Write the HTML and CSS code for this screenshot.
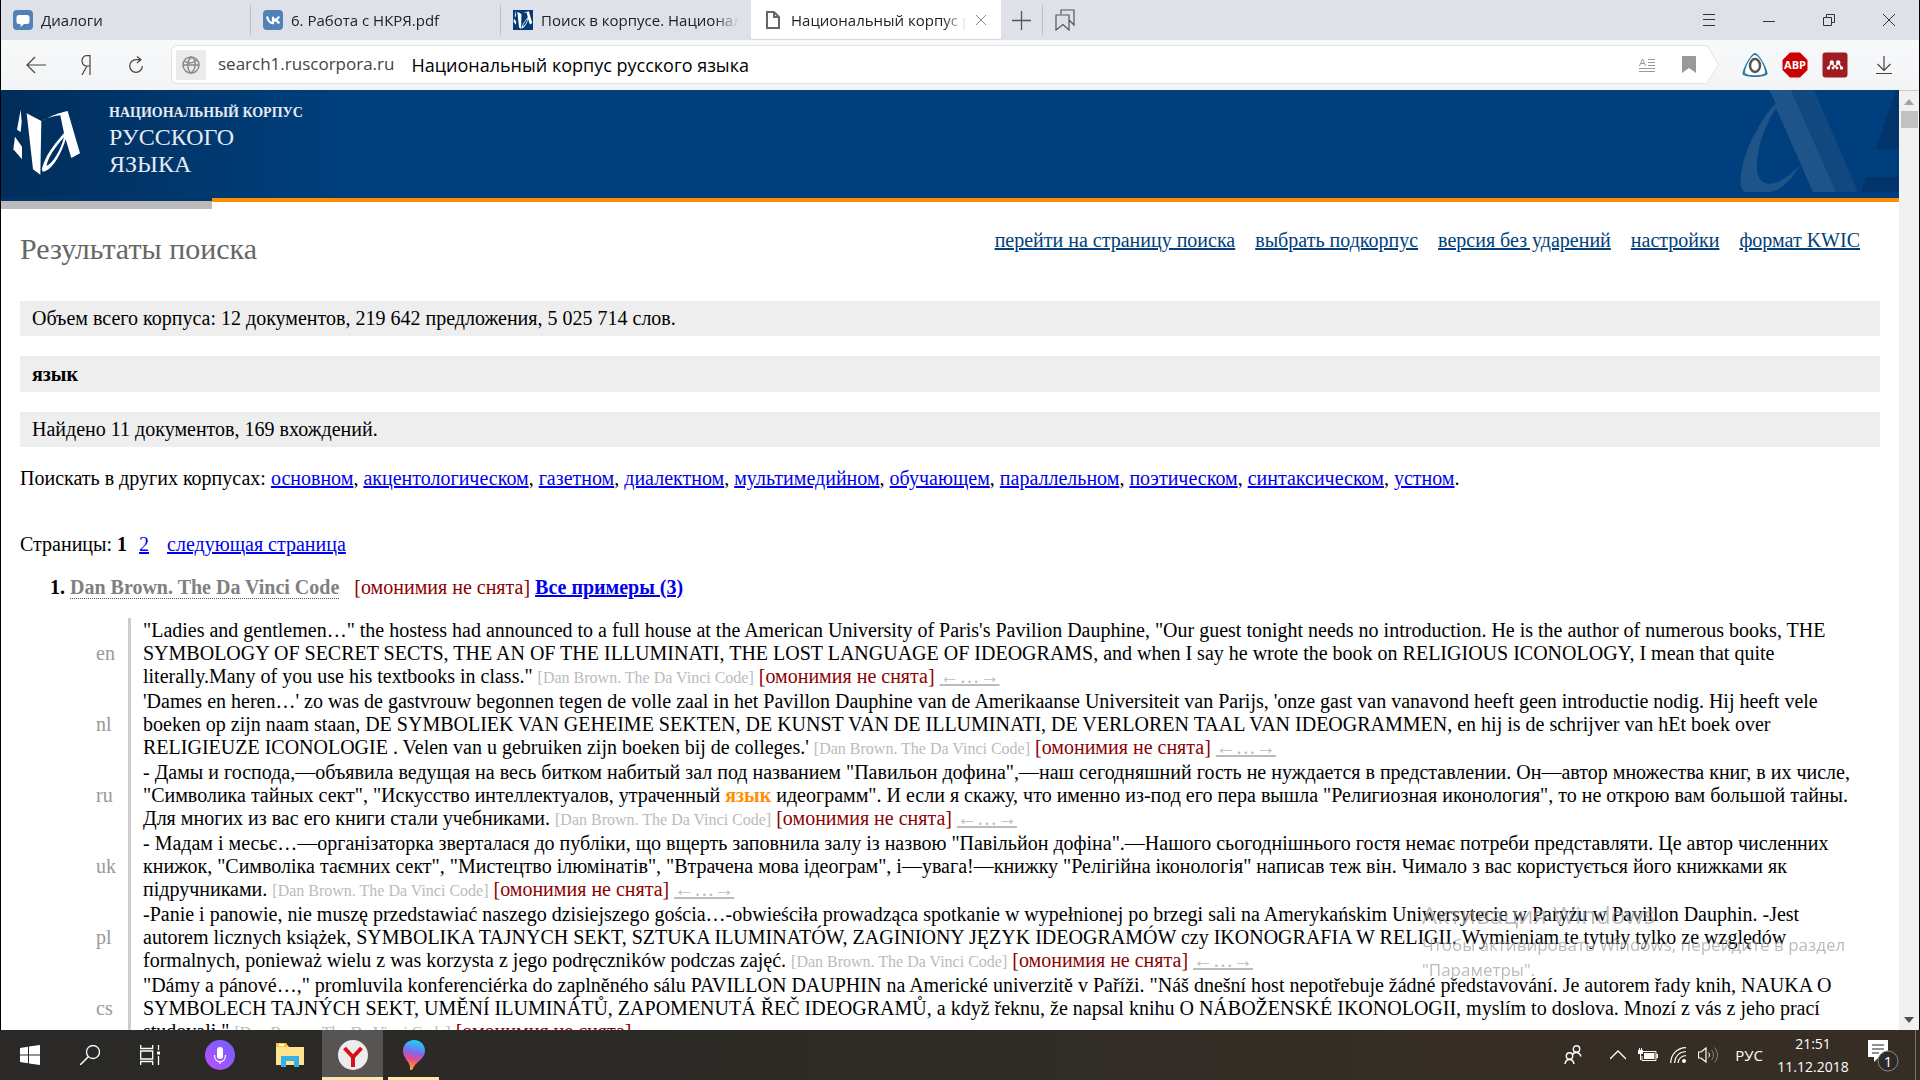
FILE: index.html
```
<!DOCTYPE html>
<html lang="ru">
<head>
<meta charset="utf-8">
<title>Национальный корпус русского языка</title>
<link rel="stylesheet" href="styles.css">
</head>
<body>
<div class="browser">
  <div class="tabbar">
    <a class="tab" href="#"><svg width="20" height="20" viewBox="0 0 20 20"><rect width="20" height="20" rx="4" fill="#5181b8"/><path d="M6 5h8a2.500 2.500 0 0 1 2.500 2.500v4A2.500 2.500 0 0 1 14 14h-3l-3.500 3v-3H6a2.500 2.500 0 0 1-2.500-2.500v-4A2.500 2.500 0 0 1 6 5z" fill="#fff"/></svg><span class="tab-title">Диалоги</span></a>
    <a class="tab" href="#"><svg width="20" height="20" viewBox="0 0 20 20"><rect width="20" height="20" rx="4" fill="#5181b8"/><path d="M4 6.500c1 3.800 2.800 6.700 6 6.700V6.700M16 6.500c-.7 2-2.500 3.200-5.500 3.300 2.500.2 4.500 1.300 5.600 3.700" fill="none" stroke="#fff" stroke-width="2.200"/></svg><span class="tab-title">6. Работа с НКРЯ.pdf</span></a>
    <a class="tab" href="#"><svg width="20" height="20" viewBox="36 50 210 214"><path d="M20 40h240v240H20z" fill="#023a76"/><use href="#logo-mark"/></svg><span class="tab-title">Поиск в корпусе. Национальный корпус</span></a>
    <a class="tab tab-active" href="#"><svg width="20" height="20" viewBox="0 0 20 20"><path d="M4 2h7l5 5v11H4zM11 2v5h5" fill="none" stroke="#666" stroke-width="2"/></svg><span class="tab-title">Национальный корпус русского</span><svg class="tab-close" width="12" height="12" viewBox="0 0 12 12"><path d="M1 1l10 10M11 1L1 11" stroke="#888"/></svg></a>
    <button class="icon-btn new-tab" aria-label="Новая вкладка"><svg width="20" height="20" viewBox="0 0 20 20"><path d="M0 10.500h19M9.500 1v19" stroke="#555" stroke-width="1.300"/></svg></button>
    <button class="icon-btn collections" aria-label="Закладки"><svg width="20" height="22" viewBox="0 0 20 22"><path d="M6 5V1h13v15l-5-5M1 6h13v15l-6-5.500L1 21z" fill="none" stroke="#555" stroke-width="1.200"/></svg></button>
    <div class="window-controls">
      <button class="icon-btn" aria-label="Меню"><svg width="12" height="12" viewBox="0 0 12 12"><path d="M0 .5h12M0 5.500h12M0 11.500h12" stroke="#333"/></svg></button>
      <button class="icon-btn" aria-label="Свернуть"><svg width="12" height="12" viewBox="0 0 12 12"><path d="M0 7.500h12" stroke="#333"/></svg></button>
      <button class="icon-btn" aria-label="Восстановить"><svg width="12" height="12" viewBox="0 0 12 12"><path d="M.5 3.500h8v8h-8zM3.500 3V.5h8v8H9" fill="none" stroke="#333"/></svg></button>
      <button class="icon-btn" aria-label="Закрыть"><svg width="12" height="12" viewBox="0 0 12 12"><path d="M0 0l12 12M12 0L0 12" stroke="#333"/></svg></button>
    </div>
  </div>

  <div class="toolbar">
    <button class="icon-btn nav-btn" aria-label="Назад"><svg width="20" height="18" viewBox="0 0 20 18"><path d="M20 9H1M9 1L1 9l8 8" fill="none" stroke="#444" stroke-width="1.200"/></svg></button>
    <button class="icon-btn nav-btn" aria-label="Яндекс"><svg width="10" height="20" viewBox="0 0 10 20"><path d="M9 20V.7H5.500C-.5.7-.5 11 5.500 11H9M6 11L1 20" fill="none" stroke="#444" stroke-width="1.200"/></svg></button>
    <button class="icon-btn nav-btn" aria-label="Обновить"><svg width="14" height="18" viewBox="0 0 14 18"><path d="M13.300 10a6.300 6.300 0 1 1-6.300-6.300h5M8 .5l4 3.200-4 3.300" fill="none" stroke="#444" stroke-width="1.200"/></svg></button>
    <form class="address">
      <button type="button" class="icon-btn site-info" aria-label="О сайте"><svg width="18" height="18" viewBox="0 0 18 18"><g fill="none" stroke="#888" stroke-width="1.400"><circle cx="9" cy="9" r="8"/><path d="M1 9h16M10 1c-6 3-5 13-1 16M10 1c5 4 4 12-1 16M2 5c4 3 9 2 13-1"/></g></svg></button>
      <label class="domain" for="omnibox">search1.ruscorpora.ru</label>
      <input id="omnibox" class="omnibox" type="text" value="Национальный корпус русского языка">
      <button type="button" class="icon-btn reader" aria-label="Режим чтения"><svg width="16" height="14" viewBox="0 0 16 14"><path d="M.5 8L3.500 1l3 7M1.500 5.500h4M9 1.500h7M9 4.500h7M9 7.500h7M0 10.500h16M0 13.500h16" fill="none" stroke="#999"/></svg></button>
      <button type="button" class="icon-btn bookmark" aria-label="В закладки"><svg width="14" height="17" viewBox="0 0 14 17"><path d="M0 1q0-1 1-1h12q1 0 1 1v16l-7-5-7 5z" fill="#999"/></svg></button>
      <svg class="address-tip" width="12" height="39" viewBox="0 0 12 39"><path d="M0 .5L11.500 19.500 0 38.500" fill="#fff" stroke="#e2e4e6"/></svg>
    </form>
    <div class="extensions">
      <button class="icon-btn" aria-label="Расширение"><svg width="26" height="26" viewBox="0 0 26 26"><path d="M13 1C17 1 26 18 25.500 22 24 26 2 26 .5 22 0 18 9 1 13 1z" fill="#2d7ba0"/><path d="M13 3c4 0 10.500 13.500 10 18-2 3-18 3-20 0C2.500 16.500 9 3 13 3z" fill="#fff"/><ellipse cx="13" cy="13.500" rx="5" ry="6.500" fill="none" stroke="#555" stroke-width="2.500"/></svg></button>
      <button class="icon-btn" aria-label="Adblock Plus"><svg width="26" height="26" viewBox="0 0 26 26"><path d="M8 .5h10L25.500 8v10L18 25.500H8L.5 18V8z" fill="#c00"/><text x="13" y="17" class="abp">ABP</text></svg></button>
      <button class="icon-btn" aria-label="Mendeley"><svg width="26" height="26" viewBox="0 0 26 26"><rect x=".5" y=".5" width="25" height="25" rx="3" fill="#a01c22"/><path d="M6.500 16L9.500 10.500 13 15l3.500-4.500 3 5.500" fill="none" stroke="#fff" stroke-width="1.300"/><g fill="#fff"><circle cx="9.800" cy="10.500" r="2.200"/><circle cx="16.200" cy="10.500" r="2.200"/><circle cx="6.500" cy="16" r="1.700"/><circle cx="19.500" cy="16" r="1.700"/><circle cx="11" cy="16" r="1.400"/><circle cx="15" cy="16" r="1.400"/></g></svg></button>
      <button class="icon-btn downloads" aria-label="Загрузки"><svg width="16" height="20" viewBox="0 0 16 20"><path d="M8 1v14M1.500 9L8 15.500 14.500 9M0 18.500h16" fill="none" stroke="#444" stroke-width="1.200"/></svg></button>
    </div>
  </div>

  <div class="viewport">
    <main class="page">
      <header class="masthead">
        <a class="brand" href="#">
          <svg width="70" height="68" viewBox="36 54 210 204"><g id="logo-mark" fill="#fff"><path d="M62 59l3 36-3 31-11-7z"/><path d="M45 140l21 30v38l-26-30z"/><path d="M80 70l44 23-3 161-22-16z"/><path d="M130 91c25-14 45-22 73-28l37 127-26 14-17-56c-12 40-36 86-62 96-7 4-11-2-8-12 10-34 28-60 65-103l-11-53c-15 1-35 7-51 14zM192 142c-34 38-50 68-52 86 18-8 42-46 52-86z"/></g></svg>
          <span class="brand-name"><span class="brand-top">НАЦИОНАЛЬНЫЙ КОРПУС</span><span class="brand-line">РУССКОГО</span><span class="brand-line">ЯЗЫКА</span></span>
        </a>
        <svg class="masthead-art" width="169" height="108" viewBox="1730 90 169 108"><path d="M1791 90h23l44 102h-22z" fill="#10487f"/><path d="M1769 90h22l45 102h-23l-37-84c-14 22-20 45-19 62 2 20 22 18 43-5-10 17-20 25-30 27h-25c-6-4-5-14-3-24 5-24 20-50 34-65z" fill="#1f5488"/><path d="M1896 90h3v59h-23zM1866 177h33v15h-38z" fill="#02346b"/></svg>
      </header>
      <div class="rule"><span class="rule-left"></span><span class="rule-right"></span></div>

      <div class="content">
        <div class="title-row">
          <h1>Результаты поиска</h1>
          <nav class="page-nav"><a href="#">перейти на страницу поиска</a><a href="#">выбрать подкорпус</a><a href="#">версия без ударений</a><a href="#">настройки</a><a href="#">формат KWIC</a></nav>
        </div>
        <div class="bars">
          <p class="bar">Объем всего корпуса: 12 документов, 219 642 предложения, 5 025 714 слов.</p>
          <p class="bar bar-query">язык</p>
          <p class="bar">Найдено 11 документов, 169 вхождений.</p>
        </div>
        <p class="others">Поискать в других корпусах: <a href="#">основном</a>, <a href="#">акцентологическом</a>, <a href="#">газетном</a>, <a href="#">диалектном</a>, <a href="#">мультимедийном</a>, <a href="#">обучающем</a>, <a href="#">параллельном</a>, <a href="#">поэтическом</a>, <a href="#">синтаксическом</a>, <a href="#">устном</a>.</p>
        <p class="pager">Страницы: <b>1</b><a class="pager-page" href="#">2</a><a class="pager-next" href="#">следующая страница</a></p>

        <ol class="results">
          <li>
            <span class="doc-title">Dan Brown. The Da Vinci Code</span><span class="homonymy">[омонимия не снята]</span> <a class="all-examples" href="#">Все примеры (3)</a>
            <table class="parallel">
              <tr><th scope="row">en</th><td>"Ladies and gentlemen…" the hostess had announced to a full house at the American University of Paris's Pavilion Dauphine, "Our guest tonight needs no introduction. He is the author of numerous books, THE SYMBOLOGY OF SECRET SECTS, THE AN OF THE ILLUMINATI, THE LOST LANGUAGE OF IDEOGRAMS, and when I say he wrote the book on RELIGIOUS ICONOLOGY, I mean that quite literally.Many of you use his textbooks in class." <small>[Dan Brown. The Da Vinci Code]</small> <span class="homonymy">[омонимия не снята]</span> <a class="context" href="#">←…→</a></td></tr>
              <tr><th scope="row">nl</th><td>'Dames en heren…' zo was de gastvrouw begonnen tegen de volle zaal in het Pavillon Dauphine van de Amerikaanse Universiteit van Parijs, 'onze gast van vanavond heeft geen introductie nodig. Hij heeft vele boeken op zijn naam staan, DE SYMBOLIEK VAN GEHEIME SEKTEN, DE KUNST VAN DE ILLUMINATI, DE VERLOREN TAAL VAN IDEOGRAMMEN, en hij is de schrijver van hEt boek over RELIGIEUZE ICONOLOGIE . Velen van u gebruiken zijn boeken bij de colleges.' <small>[Dan Brown. The Da Vinci Code]</small> <span class="homonymy">[омонимия не снята]</span> <a class="context" href="#">←…→</a></td></tr>
              <tr><th scope="row">ru</th><td>- Дамы и господа,—объявила ведущая на весь битком набитый зал под названием "Павильон дофина",—наш сегодняшний гость не нуждается в представлении. Он—автор множества книг, в их числе, "Символика тайных сект", "Искусство интеллектуалов, утраченный <b class="hit">язык</b> идеограмм". И если я скажу, что именно из-под его пера вышла "Религиозная иконология", то не открою вам большой тайны. Для многих из вас его книги стали учебниками. <small>[Dan Brown. The Da Vinci Code]</small> <span class="homonymy">[омонимия не снята]</span> <a class="context" href="#">←…→</a></td></tr>
              <tr><th scope="row">uk</th><td>- Мадам і месьє…—організаторка зверталася до публіки, що вщерть заповнила залу із назвою "Павільйон дофіна".—Нашого сьогоднішнього гостя немає потреби представляти. Це автор численних книжок, "Символіка таємних сект", "Мистецтво ілюмінатів", "Втрачена мова ідеограм", і—увага!—книжку "Релігійна іконологія" написав теж він. Чимало з вас користується його книжками як підручниками. <small>[Dan Brown. The Da Vinci Code]</small> <span class="homonymy">[омонимия не снята]</span> <a class="context" href="#">←…→</a></td></tr>
              <tr><th scope="row">pl</th><td>-Panie i panowie, nie muszę przedstawiać naszego dzisiejszego gościa…-obwieściła prowadząca spotkanie w wypełnionej po brzegi sali na Amerykańskim Uniwersytecie w Paryżu w Pavillon Dauphin. -Jest autorem licznych książek, SYMBOLIKA TAJNYCH SEKT, SZTUKA ILUMINATÓW, ZAGINIONY JĘZYK IDEOGRAMÓW czy IKONOGRAFIA W RELIGII. Wymieniam te tytuły tylko ze względów formalnych, ponieważ wielu z was korzysta z jego podręczników podczas zajęć. <small>[Dan Brown. The Da Vinci Code]</small> <span class="homonymy">[омонимия не снята]</span> <a class="context" href="#">←…→</a></td></tr>
              <tr><th scope="row">cs</th><td>"Dámy a pánové…," promluvila konferenciérka do zaplněného sálu PAVILLON DAUPHIN na Americké univerzitě v Paříži. "Náš dnešní host nepotřebuje žádné představování. Je autorem řady knih, NAUKA O SYMBOLECH TAJNÝCH SEKT, UMĚNÍ ILUMINÁTŮ, ZAPOMENUTÁ ŘEČ IDEOGRAMŮ, a když řeknu, že napsal knihu O NÁBOŽENSKÉ IKONOLOGII, myslím to doslova. Mnozí z vás z jeho prací studovali." <small>[Dan Brown. The Da Vinci Code]</small> <span class="homonymy">[омонимия не снята]</span></td></tr>
            </table>
          </li>
        </ol>
      </div>
    </main>
    <div class="scrollbar">
      <svg width="10" height="6" viewBox="0 0 10 6"><path d="M0 6l5-6 5 6z" fill="#a3a3a3"/></svg>
      <span class="scroll-thumb"></span>
      <svg class="scroll-down" width="10" height="6" viewBox="0 0 10 6"><path d="M0 0l5 6 5-6z" fill="#505050"/></svg>
    </div>
  </div>
</div>

<aside class="activation">
  <p class="activation-title">Активация Windows</p>
  <p>Чтобы активировать Windows, перейдите в раздел "Параметры".</p>
</aside>

<div class="taskbar">
  <button class="icon-btn task" aria-label="Пуск"><svg width="20" height="20" viewBox="0 0 20 20"><path d="M0 3l8-1.200v7.700H0zM9 1.600L20 0v9.500H9zM0 10.500h8v7.700L0 17zM9 10.500h11V20L9 18.400z" fill="#fff"/></svg></button>
  <button class="icon-btn task" aria-label="Поиск"><svg width="20" height="20" viewBox="0 0 20 20"><circle cx="13" cy="7" r="6.500" fill="none" stroke="#fff" stroke-width="1.300"/><path d="M8.500 11.500L0 20" stroke="#fff" stroke-width="1.500"/></svg></button>
  <button class="icon-btn task" aria-label="Представление задач"><svg width="20" height="20" viewBox="0 0 20 20"><path d="M.7 0v3.500h12V0M.7 20v-3.500h12V20M.7 6h12v8H.7zM18.500 0v5M18.500 11v9" fill="none" stroke="#fff" stroke-width="1.300"/><path d="M17 6.500h3v3h-3z" fill="#fff"/></svg></button>
  <button class="icon-btn task task-wide" aria-label="Алиса"><svg width="30" height="30" viewBox="0 0 30 30"><defs><linearGradient id="alice" x1="0" y1="1" x2="1" y2="0"><stop offset="0" stop-color="#c04dff"/><stop offset="1" stop-color="#6b62ff"/></linearGradient></defs><circle cx="15" cy="15" r="15" fill="url(#alice)"/><rect x="12" y="7" width="6" height="12" rx="3" fill="#fff"/><path d="M9.500 15c0 9 11 9 11 0M15 21.500V24" fill="none" stroke="#fff" stroke-width="1.200"/></svg></button>
  <button class="icon-btn task" aria-label="Проводник"><svg width="28" height="24" viewBox="0 0 28 24"><path d="M0 1h10l3 3h15v18H0z" fill="#ffe391"/><path d="M0 0h10l3 4H0z" fill="#ffc52e"/><path d="M3 1h5v2H3z" fill="#fff"/><path d="M5 13h18v11h-5v-6h-8v6H5z" fill="#35b1e8"/></svg></button>
  <button class="icon-btn task task-app task-active" aria-label="Яндекс.Браузер"><svg width="30" height="30" viewBox="0 0 30 30"><circle cx="15" cy="15" r="15" fill="#ececec"/><path d="M6.500 8l8.500 9 8.500-9M15 16v11" fill="none" stroke="#d81118" stroke-width="4"/></svg></button>
  <button class="icon-btn task task-app task-open" aria-label="Paint 3D"><svg width="24" height="32" viewBox="0 0 24 32"><defs><linearGradient id="paint" x1=".6" y1="0" x2=".4" y2="1"><stop offset="0" stop-color="#16d8f4"/><stop offset=".4" stop-color="#7a6cf0"/><stop offset=".65" stop-color="#e84a8a"/><stop offset="1" stop-color="#ffb020"/></linearGradient></defs><path d="M12 1c7 0 11 5 11 11 0 8-9 10-13 19-1 0-2 0-2-1 1-7-7-10-7-18C1 6 5 1 12 1z" fill="url(#paint)"/></svg></button>
  <div class="tray">
    <button class="icon-btn people" aria-label="Люди"><svg width="18" height="20" viewBox="0 0 18 20"><g fill="none" stroke="#fff" stroke-width="1.400"><circle cx="12.500" cy="4" r="3.200"/><circle cx="5.500" cy="11" r="3.200"/><path d="M8.500 9.500c2-3 7-3 8.500 2M1 19c1-6 8-6 9 0"/></g></svg></button>
    <button class="icon-btn tray-icon" aria-label="Скрытые значки"><svg width="16" height="10" viewBox="0 0 16 10"><path d="M0 9l8-8 8 8" fill="none" stroke="#fff" stroke-width="1.300"/></svg></button>
    <button class="icon-btn tray-icon" aria-label="Батарея"><svg width="20" height="14" viewBox="0 0 20 14"><path d="M5 3.500h13v9H4V8" fill="none" stroke="#fff"/><path d="M6 5h10.500v6H6zM18.500 6H20v4h-1.500zM0 2h5v4H0zM1 0h1v2H1zM3 0h1v2H3zM2 6h1v6H2z" fill="#fff"/></svg></button>
    <button class="icon-btn tray-icon" aria-label="Сеть"><svg width="16" height="16" viewBox="0 0 16 16"><g fill="none" stroke="#fff" stroke-width="1.200"><path d="M.7 16C1 7 7 1 16 .7M4.500 16C5 9 9 5 16 4.500M8 16c.5-4.500 3-7 8-7.500"/></g><circle cx="14" cy="14" r="2" fill="#fff"/></svg></button>
    <button class="icon-btn tray-icon" aria-label="Громкость"><svg width="20" height="18" viewBox="0 0 20 18"><path d="M.5 6H3l5-4v14l-5-4H.5z" fill="none" stroke="#fff" stroke-width="1.200"/><path d="M10.500 6.500c1.300 1.500 1.300 3.500 0 5" fill="none" stroke="#fff"/><path d="M13.500 4c2.500 3 2.500 7 0 10M16.500 1.500c4 5 4 10 0 15" fill="none" stroke="#8a857f"/></svg></button>
    <button class="icon-btn lang">РУС</button>
    <button class="icon-btn clock"><time>21:51</time><time>11.12.2018</time></button>
    <button class="icon-btn notifications" aria-label="Уведомления"><svg width="32" height="34" viewBox="0 0 32 34"><path d="M1 2h20v17H12l-5 5v-5H1z" fill="#fff"/><path d="M5 7h12M5 11h12M5 15h7" stroke="#222"/><circle cx="21" cy="23" r="10" fill="#2d2b29" stroke="#888"/><text x="21" y="29" class="badge">1</text></svg></button>
    <button class="icon-btn show-desktop" aria-label="Свернуть все окна"></button>
  </div>
</div>
</body>
</html>
```
FILE: styles.css
```
* { box-sizing: border-box; }
html, body { height: 100%; }
body {
  margin: 0;
  display: flex;
  flex-direction: column;
  overflow: hidden;
  font-family: "Open Sans", "Noto Sans", sans-serif;
  background: #fff;
}
p, h1 { margin: 0; }
svg { display: block; flex: none; }
.icon-btn {
  display: flex;
  align-items: center;
  justify-content: center;
  flex: none;
  padding: 0;
  border: 0;
  background: none;
  font: inherit;
  color: inherit;
}

.browser {
  flex: 1;
  min-height: 0;
  display: flex;
  flex-direction: column;
  border: solid #000;
  border-width: 0 1px;
}

/* Tab strip */
.tabbar { display: flex; flex: none; height: 40px; background: #dee1e8; }
.tab {
  position: relative;
  display: flex;
  align-items: center;
  gap: 8px;
  width: 250px;
  padding: 0 12px;
  color: #222;
  font-size: 15px;
  text-decoration: none;
}
.tab:not(.tab-active)::after {
  content: "";
  position: absolute;
  right: 0;
  top: 5px;
  bottom: 5px;
  width: 1px;
  background: #bcbfc4;
}
.tab:nth-child(3)::after { display: none; }
.tab-title {
  flex: 1;
  overflow: hidden;
  white-space: nowrap;
  -webkit-mask-image: linear-gradient(to right, #000 calc(100% - 24px), transparent);
  mask-image: linear-gradient(to right, #000 calc(100% - 24px), transparent);
}
.tab-active { background: #fff; border-bottom: 1px solid #d5d8dc; }
.tab-close { margin-right: 2px; }
.new-tab { width: 41px; }
.collections { width: 46px; position: relative; }
.collections::before {
  content: "";
  position: absolute;
  left: 0;
  top: 5px;
  bottom: 5px;
  width: 1px;
  background: #bcbfc4;
}
.window-controls { display: flex; margin-left: auto; }
.window-controls .icon-btn { width: 60px; }

/* Address row */
.toolbar {
  display: flex;
  align-items: center;
  flex: none;
  height: 50px;
  padding: 0 6px 0 10px;
  background: linear-gradient(#f8f9fb, #f2f4f6);
}
.nav-btn { width: 50px; height: 40px; }
.address { display: flex; flex: 1; height: 40px; margin-left: 10px; }
.address > * { height: 39px; border: solid #e2e4e6; border-width: 1px 0; background: #fff; }
.address .address-tip { border: 0; background: none; }
.address .site-info {
  width: 38px;
  border-left-width: 1px;
  border-radius: 6px 0 0 6px;
  background: linear-gradient(#ebebeb, #ebebeb) center / 30px 30px no-repeat #fff;
}
.domain { padding: 0 9px; font-size: 17px; line-height: 36px; color: #444; }
.omnibox { flex: 1; min-width: 0; padding: 0 8px; font: 18px/36px "Open Sans", "Noto Sans", sans-serif; color: #000; outline: 0; }
.address .reader { width: 48px; }
.address .bookmark { width: 36px; }
.extensions { display: flex; margin-left: 16px; }
.extensions .icon-btn { width: 40px; }
.extensions .downloads { width: 58px; }
.abp { font: bold 11px "Open Sans", sans-serif; fill: #fff; text-anchor: middle; }

/* Page */
.viewport { display: flex; flex: 1; min-height: 0; }
.page {
  flex: 1;
  min-width: 0;
  overflow: hidden;
  font-family: "Liberation Serif", "Times New Roman", serif;
  font-size: 20px;
  line-height: 23px;
}
.masthead {
  display: flex;
  justify-content: space-between;
  height: 108px;
  background: linear-gradient(to right, #012e5b, #003f7d 340px);
}
.brand { display: flex; gap: 27px; padding: 18px 11px 0; color: #e4ebf2; text-decoration: none; }
.brand-name { display: flex; flex-direction: column; margin-top: -6px; }
.brand-top { font-size: 14px; line-height: 22px; font-weight: bold; }
.brand-line { font-size: 24px; line-height: 27px; }
.rule { display: flex; height: 11px; }
.rule-left { width: 211px; background: #bbb; border-top: 3px solid #01346a; }
.rule-right { flex: 1; height: 4px; background: #ff8f00; }

.content { padding: 20px 19px 0; }
.title-row { display: flex; justify-content: space-between; }
h1 { margin: 2px 0 34px; font-size: 30px; line-height: 36px; font-weight: normal; color: #666; }
.page-nav { display: flex; gap: 20px; padding-right: 20px; }
.page-nav a { color: #003e7c; }
.others a, .pager a, .all-examples { color: #00e; }
.bars { display: grid; gap: 20px; }
.bar { padding: 6px 12px; background: #eee; }
.bar-query { line-height: 24px; font-weight: bold; }
.others { margin-top: 20px; }
.pager { margin-top: 43px; }
.pager-page { margin-left: 12px; }
.pager-next { margin-left: 18px; }
.results { margin: 20px 0 0; padding-left: 50px; }
.results > li::marker { font-weight: bold; }
.doc-title { margin-right: 15px; font-weight: bold; color: #808080; border-bottom: 1px dotted #555; }
.homonymy { color: #8b0000; }
.all-examples { font-weight: bold; }
.parallel { margin: 19px 0 0 26px; border-spacing: 0; line-height: 23px; }
.parallel th { width: 32px; padding: 0; font-weight: normal; text-align: left; color: #999; }
.parallel td { padding: 1px 20px 1px 12px; border-left: 3px solid #ccc; }
.parallel small { font-size: 16px; line-height: 1; color: #bbb; }
.parallel .hit { color: #ff8f00; }
.parallel .context { color: #bbb; }

.scrollbar {
  display: flex;
  flex-direction: column;
  align-items: center;
  flex: none;
  width: 20px;
  padding: 8px 0 7px;
  border-top: 1px solid #ccc;
  background: #f1f1f1;
}
.scroll-thumb { width: 17px; height: 17px; margin-top: 6px; background: #c1c1c1; }
.scroll-down { margin-top: auto; }

/* Desktop watermark, drawn over the window */
.activation {
  position: fixed;
  right: 60px;
  bottom: 98px;
  width: 438px;
  color: rgba(150, 150, 150, .65);
  font-size: 17px;
  line-height: 25px;
  pointer-events: none;
}
.activation-title { font-size: 24px; line-height: 34px; }

/* Taskbar */
.taskbar { display: flex; flex: none; height: 50px; color: #fff; background: linear-gradient(to right, #2a2927, #2e2b26 50%, #362e25 75%); }
.task { width: 60px; }
.task-wide { width: 80px; }
.task-app { width: 61px; background: no-repeat center bottom; }
.task-active { margin-left: 2px; background-color: #565553; background-image: linear-gradient(#ffe7a8, #ffe7a8); background-size: 100% 3px; }
.task-open { background-image: linear-gradient(#ffe7a8, #ffe7a8); background-size: 51px 3px; }
.tray { display: flex; margin-left: auto; }
.people { width: 60px; }
.tray-icon { width: 30px; }
.lang { width: 52px; font-size: 15px; }
.clock { flex-direction: column; width: 76px; font-size: 14px; line-height: 23px; }
.notifications { width: 64px; }
.badge { font: 15px "Open Sans", sans-serif; fill: #fff; text-anchor: middle; }
.show-desktop { width: 5px; border-left: 1px solid #77726b; }
```
